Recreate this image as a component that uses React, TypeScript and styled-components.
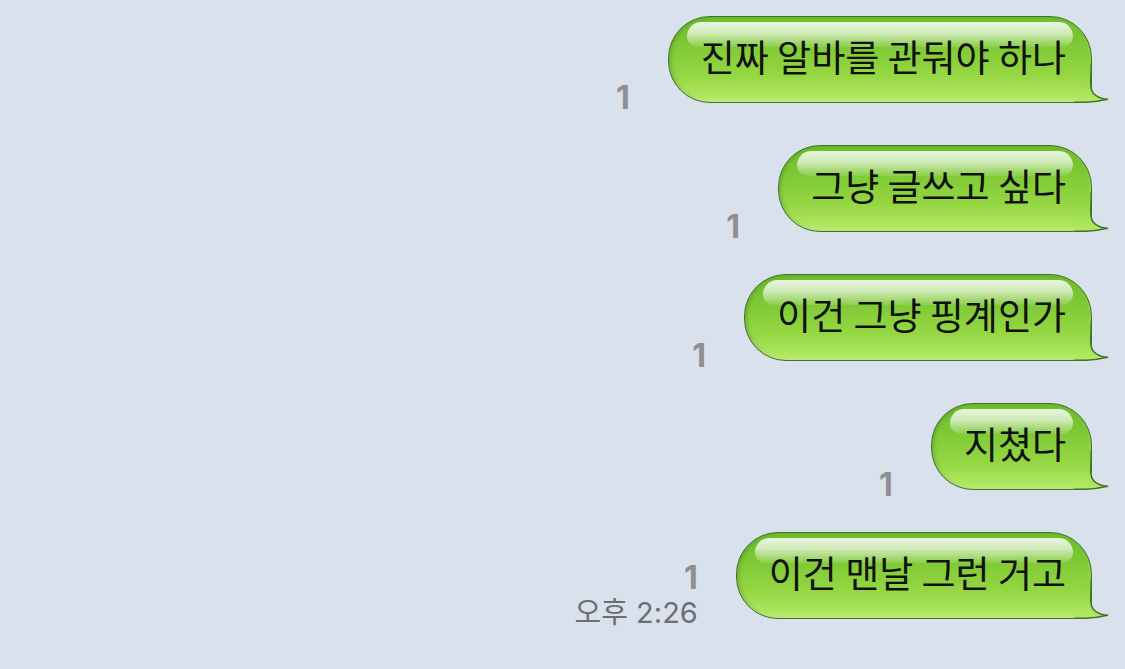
import React from "react";
import styled, { createGlobalStyle } from "styled-components";

const GlobalStyle = createGlobalStyle`
  html, body {
    margin: 0;
    padding: 0;
    background: #d9e1ec;
  }
  body {
    font-family: "Noto Sans CJK KR", "Noto Sans", sans-serif;
    overflow: hidden;
  }
`;

const Screen = styled.div`
  width: 1125px;
  height: 669px;
  background: #d9e1ec;
  box-sizing: border-box;
  padding: 16px 17px 0 0;
  display: flex;
  flex-direction: column;
  gap: 42px;
`;

const Row = styled.div`
  display: flex;
  justify-content: flex-end;
  align-items: flex-end;
`;

const Meta = styled.div`
  display: flex;
  flex-direction: column;
  align-items: flex-end;
  margin-right: 38px;
  margin-bottom: -12px;
`;

const ReadCount = styled.span`
  font-family: "Inter", "Noto Sans", sans-serif;
  font-weight: 700;
  font-size: 32px;
  line-height: 34px;
  color: #8e8e93;
`;

const Time = styled.span`
  font-family: "Inter", "Noto Sans CJK KR", sans-serif;
  font-size: 29px;
  line-height: 36px;
  color: #6d6d72;
`;

const BubbleWrap = styled.div`
  position: relative;
  padding-right: 16px;
`;

const Bubble = styled.div`
  position: relative;
  height: 87px;
  box-sizing: border-box;
  display: flex;
  align-items: center;
  padding: 0 25px 8px 32px;
  border: 1.5px solid #3f7426;
  border-radius: 42px 42px 20px 42px;
  background: linear-gradient(
    to bottom,
    #6cbc2c 0%,
    #7fca35 35%,
    #96d844 70%,
    #b6ea68 100%
  );
  box-shadow: inset 3px 0 4px -2px rgba(40, 90, 20, 0.45),
    inset 0 -2px 3px rgba(255, 255, 255, 0.25);
  font-size: 37px;
  color: #111;
  white-space: nowrap;

  &::before {
    content: "";
    position: absolute;
    left: 18px;
    right: 18px;
    top: 5px;
    height: 25px;
    border-radius: 16px 16px 12px 12px;
    background: linear-gradient(
      to bottom,
      rgba(255, 255, 255, 0.85) 0%,
      rgba(255, 255, 255, 0.65) 45%,
      rgba(255, 255, 255, 0.1) 100%
    );
  }
`;

const Label = styled.span`
  position: relative;
`;

const TailSvg = styled.svg`
  position: absolute;
  right: 0;
  bottom: 0;
  width: 36px;
  height: 40px;
  overflow: visible;
`;

const Tail: React.FC<{ id: string }> = ({ id }) => (
  <TailSvg viewBox="0 0 36 40">
    <defs>
      <linearGradient id={id} x1="0" y1="-47" x2="0" y2="40" gradientUnits="userSpaceOnUse">
        <stop offset="0" stopColor="#6cbc2c" />
        <stop offset="0.35" stopColor="#7fca35" />
        <stop offset="0.7" stopColor="#96d844" />
        <stop offset="1" stopColor="#b6ea68" />
      </linearGradient>
    </defs>
    <path
      d="M19.25 2 C19.25 16 17 25 21.5 30.5 C25 34.5 29 35.8 35.5 36.2 C29 37.8 24 39.25 14 39.25 L2 39.25 L2 2 Z"
      fill={`url(#${id})`}
    />
    <path
      d="M19.25 0 L19.25 2 C19.25 16 17 25 21.5 30.5 C25 34.5 29 35.8 35.5 36.2 C29 37.8 24 39.25 14 39.25 L2 39.25"
      fill="none"
      stroke="#3f7426"
      strokeWidth="1.5"
      strokeLinejoin="round"
    />
  </TailSvg>
);

type Msg = { text: string; read: number; time?: string };

const messages: Msg[] = [
  { text: "진짜 알바를 관둬야 하나", read: 1 },
  { text: "그냥 글쓰고 싶다", read: 1 },
  { text: "이건 그냥 핑계인가", read: 1 },
  { text: "지쳤다", read: 1 },
  { text: "이건 맨날 그런 거고", read: 1, time: "오후 2:26" },
];

export default function App() {
  return (
    <>
      <GlobalStyle />
      <Screen>
        {messages.map((m, i) => (
          <Row key={i}>
            <Meta>
              <ReadCount>{m.read}</ReadCount>
              {m.time && <Time>{m.time}</Time>}
            </Meta>
            <BubbleWrap>
              <Bubble>
                <Label>{m.text}</Label>
              </Bubble>
              <Tail id={`tailgrad${i}`} />
            </BubbleWrap>
          </Row>
        ))}
      </Screen>
    </>
  );
}
